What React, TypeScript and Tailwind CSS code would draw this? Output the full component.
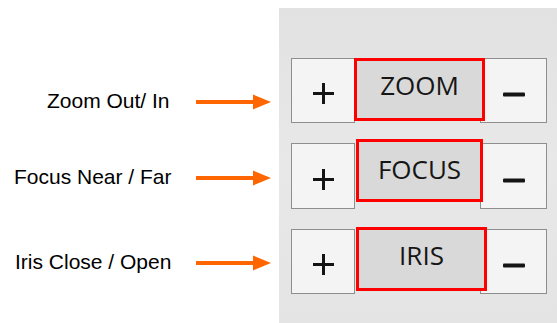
import React from "react";

function Arrow() {
  return (
    <svg width="76" height="16" viewBox="0 0 76 16" className="block">
      <rect x="0" y="6" width="58" height="4" fill="#ff6600" />
      <polygon points="57,0.5 75,8 57,15.5" fill="#ff6600" />
    </svg>
  );
}

function Plus() {
  return (
    <svg width="21" height="21" viewBox="0 0 21 21" className="block">
      <rect x="0" y="9" width="21" height="3" fill="#141414" />
      <rect x="9" y="0" width="3" height="21" fill="#141414" />
    </svg>
  );
}

function Minus() {
  return (
    <svg width="22" height="5" viewBox="0 0 22 5" className="block">
      <rect x="0" y="0.5" width="22" height="4" rx="1" fill="#141414" />
    </svg>
  );
}

function LabelRow({ text, pad }: { text: string; pad: string }) {
  return (
    <div className="flex h-[40px] items-center">
      <div className={`w-[196px] ${pad}`}>
        <span className="text-[21px] leading-none text-black whitespace-nowrap font-['Liberation_Sans',Arial,sans-serif]">
          {text}
        </span>
      </div>
      <Arrow />
    </div>
  );
}

function ControlRow({
  label,
  rowH,
  labelCls,
  textCls,
}: {
  label: string;
  rowH: string;
  labelCls: string;
  textCls: string;
}) {
  return (
    <div className={`flex items-start ${rowH}`}>
      <div className="w-[64px] h-full shrink-0 border border-[#8e8e8e] bg-[#f4f4f4] flex items-center justify-center pt-[6px]">
        <Plus />
      </div>
      <div
        className={`relative z-10 shrink-0 border-[3px] border-[#ff0000] bg-[#d9d9d9] flex items-center justify-center ${labelCls}`}
      >
        <span
          className={`text-[26px] leading-none font-medium text-[#161616] font-['Open_Sans',sans-serif] ${textCls}`}
        >
          {label}
        </span>
      </div>
      <div className="w-[67px] h-full shrink-0 border border-[#8e8e8e] bg-[#f4f4f4] flex items-center justify-center pt-[8px]">
        <Minus />
      </div>
    </div>
  );
}

export default function App() {
  return (
    <div className="w-[557px] h-[323px] bg-white flex overflow-hidden">
      <div className="w-[279px] shrink-0 flex flex-col pt-[82px]">
        <LabelRow text="Zoom Out/ In" pad="pl-[47px]" />
        <div className="h-[36px]" />
        <LabelRow text="Focus Near / Far" pad="pl-[14px]" />
        <div className="h-[45px]" />
        <LabelRow text="Iris Close / Open" pad="pl-[15px]" />
      </div>
      <div className="w-[278px] h-[315px] mt-[8px] shrink-0 bg-gradient-to-b from-[#e2e2e2] via-[#e8e8e8] to-[#e4e4e4] pt-[50px] pl-[12px] pr-[10px] flex flex-col gap-[20px]">
        <ControlRow
          label="ZOOM"
          rowH="h-[65px]"
          labelCls="w-[131px] h-[63px] ml-[-1px] mr-[-5px]"
          textCls="pb-[10px]"
        />
        <ControlRow
          label="FOCUS"
          rowH="h-[66px]"
          labelCls="w-[127px] h-[63px] mt-[-4px] ml-[1px] mr-[-3px]"
          textCls="pb-[4px]"
        />
        <ControlRow
          label="IRIS"
          rowH="h-[65px]"
          labelCls="w-[131px] h-[64px] mt-[-2px] ml-[1px] mr-[-7px]"
          textCls="pb-[8px]"
        />
      </div>
    </div>
  );
}
